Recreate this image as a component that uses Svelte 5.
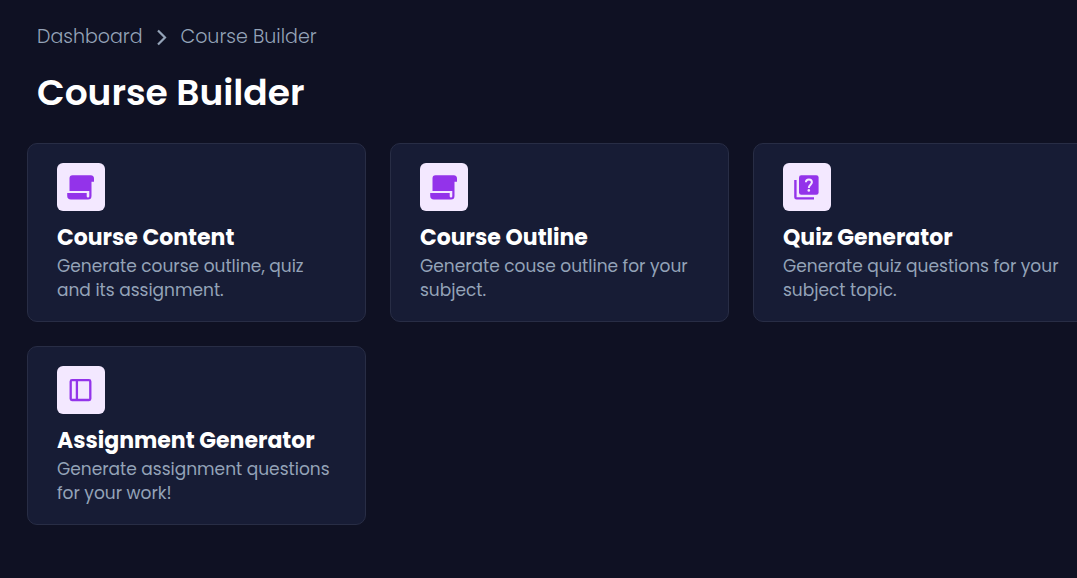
<script>
  const tools = [
    { icon: 'scroll', title: 'Course Content', text: 'Generate course outline, quiz and its assignment.' },
    { icon: 'scroll', title: 'Course Outline', text: 'Generate couse outline for your subject.' },
    { icon: 'quiz', title: 'Quiz Generator', text: 'Generate quiz questions for your subject topic.' },
    { icon: 'panel', title: 'Assignment Generator', text: 'Generate assignment questions for your work!' }
  ];
</script>

<main>
  <nav aria-label="Breadcrumb">
    <a href="#dashboard">Dashboard</a>
    <svg width="12" height="18" viewBox="0 0 12 18" fill="none" stroke="currentColor" stroke-width="2.2" aria-hidden="true">
      <path d="M2 2.5 L9 9.5 L2 16.5" />
    </svg>
    <a href="#course-builder">Course Builder</a>
  </nav>

  <h1>Course Builder</h1>

  <div class="grid">
    {#each tools as tool}
      <a class="card" href="#{tool.icon}">
        <span class="badge">
          <svg width="48" height="48" viewBox="0 0 48 48" aria-hidden="true">
            {#if tool.icon === 'scroll'}
              <path
                fill="currentColor"
                d="M15.5 12.3H33.5A3.4 3.4 0 0 1 37 15.8V18.7H34.5V33A3.5 3.5 0 0 1 31 36.5H14A3.8 3.8 0 0 1 10.2 32.7V30H29.7V33.3A1.3 1.3 0 0 0 32.3 33.3V28H12.5V15.3A3 3 0 0 1 15.5 12.3Z"
              />
            {:else if tool.icon === 'quiz'}
              <rect x="16" y="12.2" width="19.6" height="19.6" rx="2.3" fill="currentColor" />
              <path
                fill="currentColor"
                d="M11.2 17H13.6V34.2H31V36.6H13.6A2.4 2.4 0 0 1 11.2 34.2Z"
              />
              <path
                fill="none"
                stroke="#f3e8ff"
                stroke-width="2"
                d="M22.9 19.3C22.9 17.6 24.2 16.5 25.9 16.5C27.6 16.5 28.9 17.6 28.9 19.3C28.9 21.8 25.8 21.8 25.8 25"
              />
              <circle cx="25.8" cy="27.4" r="1.3" fill="#f3e8ff" />
            {:else}
              <g fill="none" stroke="currentColor" stroke-width="2.3">
                <rect x="13.7" y="14.2" width="19.6" height="19.8" rx="1.3" />
                <path d="M19.9 14.2V34" />
              </g>
            {/if}
          </svg>
        </span>
        <h2>{tool.title}</h2>
        <p>{tool.text}</p>
      </a>
    {/each}
  </div>
</main>

<style>
  :global(body) {
    background: #0f1123;
  }

  main {
    box-sizing: border-box;
    min-height: 100vh;
    padding: 23px 0 52px 27px;
    overflow: hidden;
    font-family: Poppins, Inter, sans-serif;
    color: #fff;
  }

  nav {
    display: flex;
    align-items: center;
    gap: 13px;
    padding-left: 10px;
    font-size: 19px;
    font-weight: 300;
    line-height: 28px;
    color: #94a3b8;
  }

  a {
    color: inherit;
    text-decoration: none;
  }

  h1 {
    margin: 19px 0 28px;
    padding-left: 10px;
    font-size: 36px;
    font-weight: 600;
    line-height: 45px;
  }

  .grid {
    display: grid;
    grid-template-columns: repeat(3, minmax(0, 1fr));
    gap: 24px;
    margin-right: -15px;
  }

  .card {
    padding: 19px 29px;
    border: 1px solid #282d45;
    border-radius: 10px;
    background: #171c35;
  }

  .badge {
    display: flex;
    width: 48px;
    height: 48px;
    border-radius: 6px;
    background: #f3e8ff;
    color: #9333ea;
  }

  h2 {
    margin: 13px 0 2px;
    font-size: 22px;
    font-weight: 700;
    line-height: 28px;
  }

  p {
    margin: 0;
    font-size: 17px;
    line-height: 24px;
    color: #94a3b8;
  }
</style>
